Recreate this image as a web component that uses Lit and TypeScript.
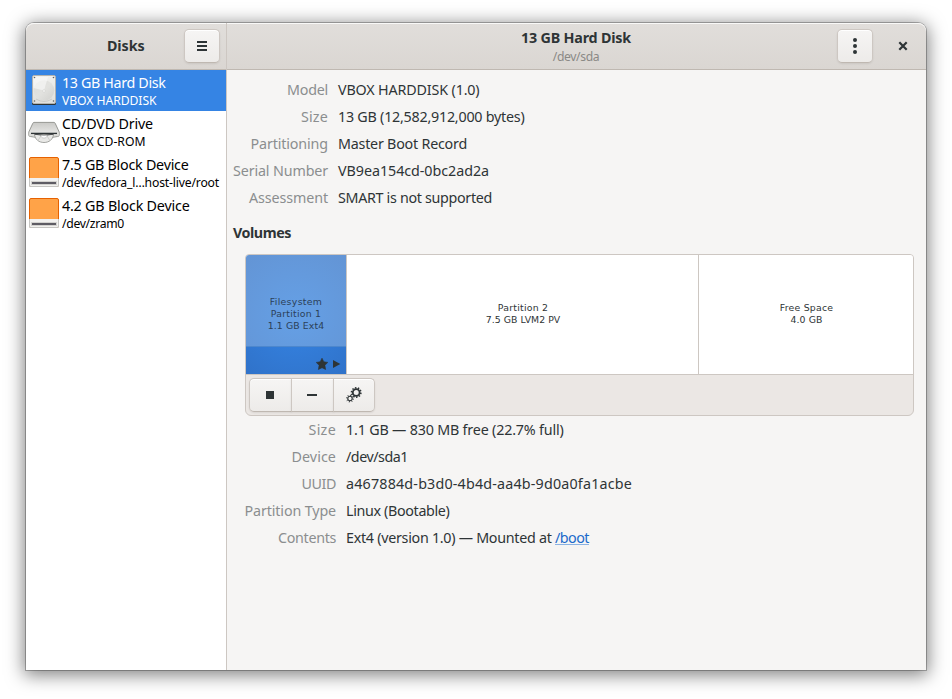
import { LitElement, html, css, svg } from "lit";
import { customElement, property } from "lit/decorators.js";
import { styleMap } from "lit/directives/style-map.js";

const UI = '"Noto Sans", "Open Sans", sans-serif';
const SMALL = '"DejaVu Sans", sans-serif';
const ctx = document.createElement("canvas").getContext("2d")!;

/* Text set to a given advance width by tracking. */
@customElement("tracked-text")
class TrackedText extends LitElement {
  @property() text = "";
  @property({ type: Number }) width = 0;
  @property() variant = "body";

  static styles = css`
    :host { display: inline-block; white-space: pre; }
    .body { font: 400 14.3px "Noto Sans", "Open Sans", sans-serif; }
    .bold { font: 700 14.3px "Noto Sans", "Open Sans", sans-serif; }
    .sub { font: 400 12.2px "Noto Sans", "Open Sans", sans-serif; }
    .tiny { font: 400 9.33px "DejaVu Sans", sans-serif; }
    .t { display: block; line-height: inherit; }
  `;

  render() {
    const fonts: Record<string, string> = {
      body: `400 14.3px ${UI}`,
      bold: `700 14.3px ${UI}`,
      sub: `400 12.2px ${UI}`,
      tiny: `400 9.33px ${SMALL}`,
    };
    ctx.font = fonts[this.variant];
    const gap = (this.width - ctx.measureText(this.text).width) / this.text.length;
    return html`<span class="t ${this.variant}" style=${styleMap({ letterSpacing: `${gap.toFixed(3)}px`, lineHeight: "inherit" })}>${this.text}</span>`;
  }
}

const tt = (text: string, width: number, variant = "body") =>
  html`<tracked-text .text=${text} .width=${width} .variant=${variant}></tracked-text>`;

const hardDisk = svg`<svg width="32" height="32" viewBox="0 0 32 32">
  <defs>
    <linearGradient id="hb" x1="0" y1="0" x2="0" y2="1"><stop offset="0" stop-color="#f0f0ee"/><stop offset="1" stop-color="#e0e0dd"/></linearGradient>
    <linearGradient id="hp" x1="0" y1="0" x2="1" y2="1"><stop offset="0" stop-color="#dededb"/><stop offset=".5" stop-color="#e2e2df"/><stop offset="1" stop-color="#d0d0cd"/></linearGradient>
  </defs>
  <rect x="4" y="26" width="24" height="5" rx="1.500" fill="#2e3436"/>
  <rect x="4.500" y="1.500" width="23" height="28" rx="1.500" fill="url(#hb)" stroke="#b4b3af"/>
  <circle cx="16" cy="16.500" r="10.300" fill="url(#hp)"/>
  <path d="M16 16.500L5.500 14V3H20Z" fill="#fafafa" opacity=".6"/>
  <circle cx="16" cy="17" r="1.400" fill="#f4f4f2" stroke="#cbcbc8" stroke-width=".5"/>
  <path d="M8 25q8 5 16 0" fill="none" stroke="#c4c4c1" stroke-width=".8"/>
  <g fill="#62625f"><circle cx="6.500" cy="3.500" r=".8"/><circle cx="25.500" cy="3.500" r=".8"/><circle cx="6.500" cy="27" r=".8"/><circle cx="25.500" cy="27" r=".8"/></g>
</svg>`;

const optical = svg`<svg width="32" height="32" viewBox="0 0 32 32">
  <defs><linearGradient id="og" x1="0" y1="0" x2="0" y2="1"><stop offset="0" stop-color="#c9c9c6"/><stop offset="1" stop-color="#f2f2f0"/></linearGradient></defs>
  <path d="M6 7.400h20q.8 0 1.200.9L31.200 17v3q0 1.500-1.500 1.500L25 22.200H7L2.300 21.500Q.8 21.500.8 20v-3L4.800 8.300q.4-.9 1.200-.9z" fill="url(#og)" stroke="#8d8e8a" stroke-width=".9"/>
  <path d="M1.300 17.600h29.400v2.600q0 .8-1 .8H2.300q-1 0-1-.8z" fill="#dcdcd9"/>
  <path d="M6.500 19.500h19C25 24.500 21 27.500 16 27.500S7 24.500 6.500 19.500z" fill="#e9e9e7" stroke="#8d8e8a" stroke-width=".8"/>
  <path d="M13.500 20l-3.500 5.500M18.500 20l3 5" stroke="#cfcfcc"/>
  <path d="M3 18.400h26" stroke="#2e3436" stroke-width="1.300"/>
  <path d="M6.500 19.200q9.500 2.400 19 0" fill="none" stroke="#3c4042" stroke-width=".9"/>
  <path d="M13 20.500c0 1.800 1.300 2.600 3 2.600s3-.8 3-2.600" fill="#fff" stroke="#b4b4b1" stroke-width=".6"/>
</svg>`;

const block = svg`<svg width="32" height="32" viewBox="0 0 32 32">
  <rect x="1.500" y="1.500" width="29" height="29" rx="1.500" fill="#ffa348" stroke="#e66100"/>
  <path d="M1 22h30v7.500q0 1.500-1.500 1.500h-27Q1 31 1 29.500z" fill="#c6c5c2"/>
  <path d="M2 22h28v7q0 1-1 1H3q-1 0-1-1z" fill="#f2f1ef"/>
  <rect x="3" y="25" width="26" height="4" fill="#d3d2cf"/>
  <rect x="4" y="26" width="24" height="2" fill="#5e5c64"/>
</svg>`;

const gear = (cx: number, cy: number, r: number, n: number, w: number) => svg`
  <circle cx=${cx} cy=${cy} r=${r} fill="none" stroke="#2e3436" stroke-width=${w}/>
  ${Array.from({ length: n }, (_, i) => {
    const a = (i * 2 * Math.PI) / n + 0.2;
    const p = (q: number) => `${(cx + q * Math.cos(a)).toFixed(2)} ${(cy + q * Math.sin(a)).toFixed(2)}`;
    return svg`<path d=${`M${p(r + w * 0.3)}L${p(r + w * 0.5 + 1.2)}`} stroke="#2e3436" stroke-width=${w * 0.85}/>`;
  })}`;

const devices = [
  { icon: hardDisk, title: "13 GB Hard Disk", tw: 103.5, sub: "VBOX HARDDISK", sw: 94.5, on: true },
  { icon: optical, title: "CD/DVD Drive", tw: 91, sub: "VBOX CD-ROM", sw: 83.5 },
  { icon: block, title: "7.5 GB Block Device", tw: 126.5, sub: "/dev/fedora_l…host-live/root", sw: 157 },
  { icon: block, title: "4.2 GB Block Device", tw: 127.5, sub: "/dev/zram0", sw: 62 },
];

type Row = [string, number, string, number];
const driveRows: Row[] = [
  ["Model", 41, "VBOX HARDDISK (1.0)", 141.5],
  ["Size", 27, "13 GB (12,582,912,000 bytes)", 186.5],
  ["Partitioning", 77.5, "Master Boot Record", 129],
  ["Serial Number", 95, "VB9ea154cd-0bc2ad2a", 151],
  ["Assessment", 79, "SMART is not supported", 154],
];
const volumeRows: Row[] = [
  ["Size", 27.5, "1.1 GB — 830 MB free (22.7% full)", 217.5],
  ["Device", 44.5, "/dev/sda1", 62],
  ["UUID", 34.5, "a467884d-b3d0-4b4d-aa4b-9d0a0fa1acbe", 286],
  ["Partition Type", 91.5, "Linux (Bootable)", 103.5],
  ["Contents", 58, "Ext4 (version 1.0) — Mounted at ", 209],
];

@customElement("app-root")
class AppRoot extends LitElement {
  static styles = css`
    :host { display: block; box-sizing: border-box; width: 952px; height: 699px; padding: 23px 26px 29px; background: #fff; overflow: hidden; color: #2e3436; }
    * { box-sizing: border-box; }
    svg { display: block; }
    .window { display: grid; grid-template-columns: 200px 1px 699px; grid-template-rows: 47px 600px; height: 647px; border-radius: 8px 8px 0 0; background: #f6f5f4;
      box-shadow: 0 0 0 1px rgba(0,0,0,.26), 0 3px 18px 2px rgba(0,0,0,.5); }
    .bar { display: flex; align-items: center; background: linear-gradient(#e1dedb, #dad6d2); border-bottom: 1px solid #bfb8b1; box-shadow: inset 0 1px rgba(255,255,255,.8); }
    .bar.l { border-radius: 8px 0 0 0; justify-content: space-between; padding: 0 6px 0 81px; }
    .bar.l tracked-text { padding-bottom: 2px; }
    .bar.r { border-radius: 0 8px 0 0; padding-left: 130px; }
    .sep { background: #cdc7c2; }
    .btn { display: grid; place-items: center; width: 36px; height: 34px; border: 1px solid #cdc7c2; border-bottom-color: #bfb8b1; border-radius: 5px;
      background: linear-gradient(#f6f5f4, #edebe9); box-shadow: inset 0 1px #fff, 0 1px 2px rgba(0,0,0,.08); }
    .heading { width: 438px; display: flex; flex-direction: column; align-items: center; line-height: 18px; padding-top: 1px; }
    .dim { color: #8b8e8f; }
    .heading .dim { color: #8a8986; line-height: 17px; }
    .bar.r .btn { margin-left: 42px; }
    .close { margin-left: 25px; }
    .side { background: #fff; color: #000; }
    .device { display: flex; height: 41px; padding: 4px 0 0 2px; gap: 2px; }
    .device.on { background: #3584e4; color: #fff; }
    .device svg { flex: none; }
    .names { display: flex; flex-direction: column; line-height: 18px; }
    .main { display: flex; flex-direction: column; padding: 6px 12px 0 7px; }
    .rows { display: grid; grid-template-columns: 95px auto; column-gap: 10px; grid-auto-rows: 27px; justify-content: start; justify-items: end; line-height: 27px; margin-left: -1px; }
    .rows .value { justify-self: start; display: flex; }
    .rows.vol { grid-template-columns: 91px auto; margin-left: 11px; }
    .section { height: 27px; line-height: 27px; margin: 8px 0 8px -1px; }
    .volumes { width: 669px; height: 162px; margin-left: 11px; border: 1px solid #cdc7c2; border-radius: 4px 4px 6px 6px; overflow: hidden; background: #ebe7e4; }
    .parts { display: flex; height: 120px; border-bottom: 1px solid #cdc7c2; background: #fff; line-height: 12px; }
    .part { display: flex; flex-direction: column; align-items: center; justify-content: center; border-right: 1px solid #cdc7c2; padding: 0 0 2px 1px; }
    .p1 { width: 101px; }
    .p2 { width: 352px; }
    .p3 { width: 214px; border: 0; }
    .p1 { background: radial-gradient(circle at 50% 50%, #65a0e6, #6394d4 80px); display: block; color: #2b4058; padding: 0; }
    .fs { height: 92px; display: flex; flex-direction: column; align-items: center; padding-top: 41px; border-bottom: 1px solid #4d87cd; }
    .used { height: 27px; background: radial-gradient(circle at 50% -30px, #3584e4, #2f6fc4 90px); display: flex; align-items: center; justify-content: flex-end; gap: 4px; padding: 7px 5px 0 0; }
    .actions { display: flex; padding: 3px; height: 40px; }
    .actions .btn { width: 43px; margin-right: -1px; border-radius: 0; }
    .actions .btn:first-child { border-radius: 5px 0 0 5px; }
    .actions .btn:last-child { border-radius: 0 5px 5px 0; width: 42px; }
    .actions .btn:not(:last-child) svg { margin-right: 1px; }
    .link { color: #1b6acb; text-decoration: none; border-bottom: 1px solid #8bb2e2; height: 21px; }
  `;

  private rows(list: Row[], cls: string, link = false) {
    return html`<div class="rows ${cls}">
      ${list.map(([k, kw, v, vw], i) => html`
        <span class="dim">${tt(k, kw)}</span>
        <span class="value">${tt(v, vw)}${link && i === list.length - 1 ? html`<a class="link">${tt("/boot", 34)}</a>` : ""}</span>`)}
    </div>`;
  }

  render() {
    return html`<div class="window">
      <header class="bar l">
        ${tt("Disks", 37.5, "bold")}
        <div class="btn"><svg width="16" height="16"><path d="M3 4h10M3 8h10M3 12h10" stroke="#2e3436" stroke-width="2"/></svg></div>
      </header>
      <div class="sep"></div>
      <header class="bar r">
        <div class="heading">${tt("13 GB Hard Disk", 110, "bold")}<span class="dim">${tt("/dev/sda", 46.5, "sub")}</span></div>
        <div class="btn"><svg width="16" height="16"><g fill="#2e3436"><circle cx="8" cy="2" r="2"/><circle cx="8" cy="8" r="2"/><circle cx="8" cy="14" r="2"/></g></svg></div>
        <svg class="close" width="10" height="10"><path d="M1.300 1.300l7.400 7.400M8.700 1.300L1.300 8.700" stroke="#2e3436" stroke-width="2.200"/></svg>
      </header>
      <nav class="side">
        ${devices.map(d => html`<div class="device ${d.on ? "on" : ""}">${d.icon}<div class="names">${tt(d.title, d.tw)}${tt(d.sub, d.sw, "sub")}</div></div>`)}
      </nav>
      <div class="sep"></div>
      <main class="main">
        ${this.rows(driveRows, "")}
        <div class="section">${tt("Volumes", 58, "bold")}</div>
        <section class="volumes">
          <div class="parts">
            <div class="part p1">
              <div class="fs">${tt("Filesystem", 52.5, "tiny")}${tt("Partition 1", 50.5, "tiny")}${tt("1.1 GB Ext4", 56.5, "tiny")}</div>
              <div class="used">
                <svg width="12" height="12"><path d="M6 .2l1.800 3.600 4 .6-2.900 2.900.7 4.200L6 9.700l-3.600 1.800.7-4.200L.2 4.400l4-.6z" fill="#2e3436" stroke="#2e3436" stroke-width=".6" stroke-linejoin="round"/></svg>
                <svg width="9" height="10"><path d="M1 1l7.300 4L1 9z" fill="#2e3436"/></svg>
              </div>
            </div>
            <div class="part p2">${tt("Partition 2", 50.5, "tiny")}${tt("7.5 GB LVM2 PV", 74.5, "tiny")}</div>
            <div class="part p3">${tt("Free Space", 53.5, "tiny")}${tt("4.0 GB", 32, "tiny")}</div>
          </div>
          <div class="actions">
            <div class="btn"><svg width="16" height="16"><rect x="4" y="4" width="8" height="8" fill="#2e3436"/></svg></div>
            <div class="btn"><svg width="16" height="16"><rect x="3" y="7" width="10" height="2" fill="#2e3436"/></svg></div>
            <div class="btn"><svg width="16" height="16">${gear(10.2, 5.5, 3.4, 10, 1.8)}${gear(4, 11.5, 2.2, 8, 1.1)}</svg></div>
          </div>
        </section>
        ${this.rows(volumeRows, "vol", true)}
      </main>
    </div>`;
  }
}
